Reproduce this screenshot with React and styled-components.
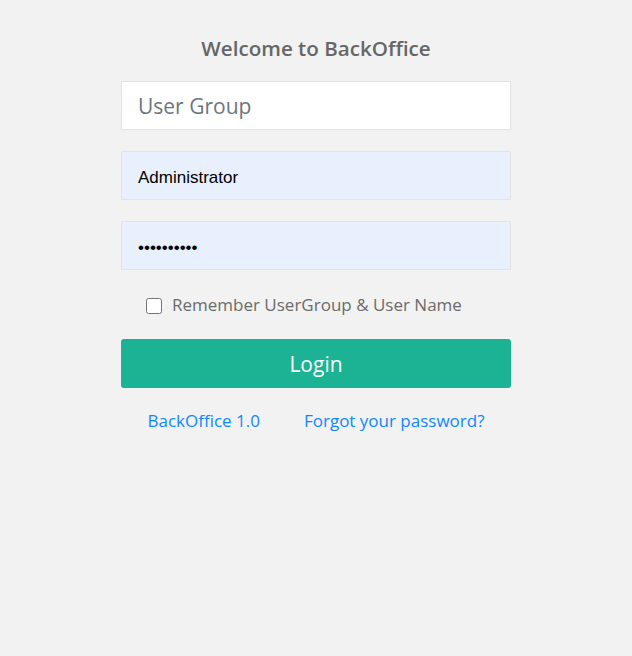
import React from 'react';
import styled, { createGlobalStyle } from 'styled-components';

const GlobalStyle = createGlobalStyle`
  body {
    margin: 0;
    background: #f2f2f2;
    font-family: "Open Sans", "Liberation Sans", sans-serif;
  }
`;

const Page = styled.div`
  min-height: 656px;
  display: flex;
  justify-content: center;
  padding-top: 34px;
  box-sizing: border-box;
`;

const Form = styled.form`
  width: 390px;
  display: flex;
  flex-direction: column;
`;

const Title = styled.h1`
  margin: 0 0 19px;
  text-align: center;
  font-size: 20.6px;
  line-height: 28px;
  font-weight: 600;
  color: #666666;
`;

const Input = styled.input`
  height: 49px;
  box-sizing: border-box;
  margin-bottom: 21px;
  padding: ${({ $filled }) => ($filled ? '5px 16px 0' : '0 16px')};
  border: 1px solid #e3e3e3;
  background: ${({ $filled }) => ($filled ? '#e8f0fe' : '#ffffff')};
  font-family: ${({ $filled }) => ($filled ? '"Liberation Sans", Arial, sans-serif' : '"Open Sans", sans-serif')};
  font-size: ${({ $filled }) => ($filled ? '17px' : '21px')};
  color: #000;
  outline: none;
  &::placeholder {
    color: #6c757d;
  }
`;

const Remember = styled.label`
  display: flex;
  align-items: center;
  gap: 10px;
  margin: -1px 0 21px 25px;
  height: 28px;
  font-size: 17px;
  color: #6b6b6b;
`;

const Check = styled.input`
  width: 16px;
  height: 16px;
  margin: 4px 0 0;
`;

const LoginButton = styled.button`
  height: 49px;
  border: none;
  border-radius: 3px;
  background: #1bb394;
  color: #fff;
  font-family: "Open Sans", sans-serif;
  font-size: 21px;
  cursor: pointer;
`;

const Links = styled.div`
  display: flex;
  justify-content: center;
  gap: 44px;
  margin-top: 21px;
`;

const Link = styled.a`
  color: #1087ff;
  font-size: 17px;
  text-decoration: none;
`;

export default function App() {
  return (
    <>
      <GlobalStyle />
      <Page>
        <Form onSubmit={(e) => e.preventDefault()}>
          <Title>Welcome to BackOffice</Title>
          <Input placeholder="User Group" />
          <Input $filled defaultValue="Administrator" />
          <Input $filled type="password" defaultValue="1234567890" />
          <Remember>
            <Check type="checkbox" />
            Remember UserGroup &amp; User Name
          </Remember>
          <LoginButton type="submit">Login</LoginButton>
          <Links>
            <Link href="#">BackOffice 1.0</Link>
            <Link href="#">Forgot your password?</Link>
          </Links>
        </Form>
      </Page>
    </>
  );
}
